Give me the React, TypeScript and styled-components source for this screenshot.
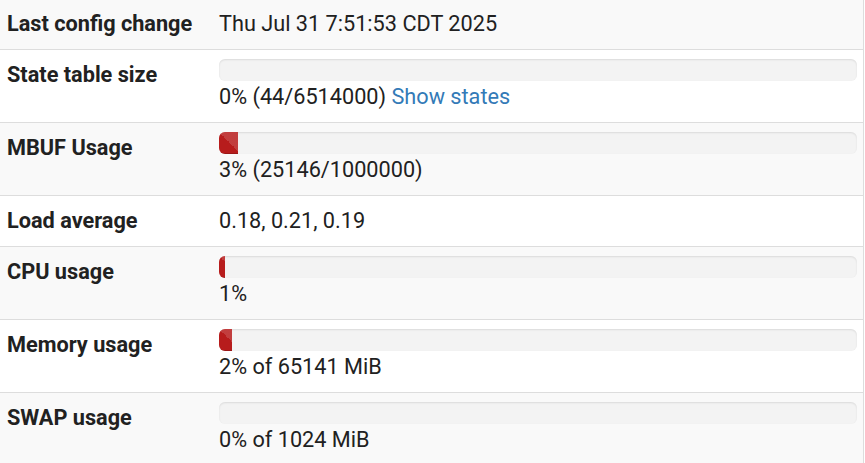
import styled, { createGlobalStyle } from "styled-components";

const GlobalStyle = createGlobalStyle`
	html, body {
		margin: 0;
		padding: 0;
		overflow: hidden;
		background-color: #fff;
	}
	body {
		font-family: Roboto, "Liberation Sans", sans-serif;
		color: #212121;
	}
`;

type Row = {
	label: string;
	value: string;
	percent?: number;
	link?: string;
};

const rows: Row[] = [
	{ label: "Last config change", value: "Thu Jul 31 7:51:53 CDT 2025" },
	{ label: "State table size", value: "0% (44/6514000)", percent: 0, link: "Show states" },
	{ label: "MBUF Usage", value: "3% (25146/1000000)", percent: 3 },
	{ label: "Load average", value: "0.18, 0.21, 0.19" },
	{ label: "CPU usage", value: "1%", percent: 1 },
	{ label: "Memory usage", value: "2% of 65141 MiB", percent: 2 },
	{ label: "SWAP usage", value: "0% of 1024 MiB", percent: 0 },
];

function App() {
	return (
		<>
			<GlobalStyle />
			<StTable>
				<tbody>
					{rows.map((row) => (
						<StRow key={row.label}>
							<StLabel>{row.label}</StLabel>
							<StValue>
								{row.percent !== undefined && (
									<StProgress>
										<StBar style={{ width: `${row.percent}%` }} />
									</StProgress>
								)}
								<StText>
									{row.value}
									{row.link && (
										<>
											{" "}
											<StLink href="#">{row.link}</StLink>
										</>
									)}
								</StText>
							</StValue>
						</StRow>
					))}
				</tbody>
			</StTable>
		</>
	);
}

export default App;

const StTable = styled.table`
	width: 864px;
	margin-top: -1px;
	border-collapse: collapse;
	border-right: 1px solid #ddd;
	font-size: 21.7px;
	line-height: 28px;
`;

const StRow = styled.tr`
	&:nth-child(odd) {
		background-color: #f9f9f9;
	}
	& + & > * {
		border-top: 1px solid #ddd;
	}
`;

const StLabel = styled.th`
	width: 198px;
	padding: 11px 7px;
	text-align: left;
	vertical-align: top;
	font-weight: 700;
	white-space: nowrap;
`;

const StValue = styled.td`
	padding: 11px 6px 11px 7px;
	vertical-align: top;
`;

const StProgress = styled.div`
	height: 22px;
	margin-top: -2px;
	margin-bottom: 2px;
	overflow: hidden;
	border-radius: 6px;
	background-color: #f3f3f3;
	box-shadow: inset 0 1px 2px rgba(0, 0, 0, 0.1);
`;

const StBar = styled.div`
	height: 100%;
	background-color: #b71c1c;
	background-image: linear-gradient(
		45deg,
		rgba(255, 255, 255, 0.15) 25%,
		transparent 25%,
		transparent 50%,
		rgba(255, 255, 255, 0.15) 50%,
		rgba(255, 255, 255, 0.15) 75%,
		transparent 75%,
		transparent
	);
	background-size: 40px 40px;
	box-shadow: inset 0 -1px 0 rgba(0, 0, 0, 0.15);
`;

const StText = styled.div`
	white-space: nowrap;
`;

const StLink = styled.a`
	color: #337ab7;
	text-decoration: none;
`;
